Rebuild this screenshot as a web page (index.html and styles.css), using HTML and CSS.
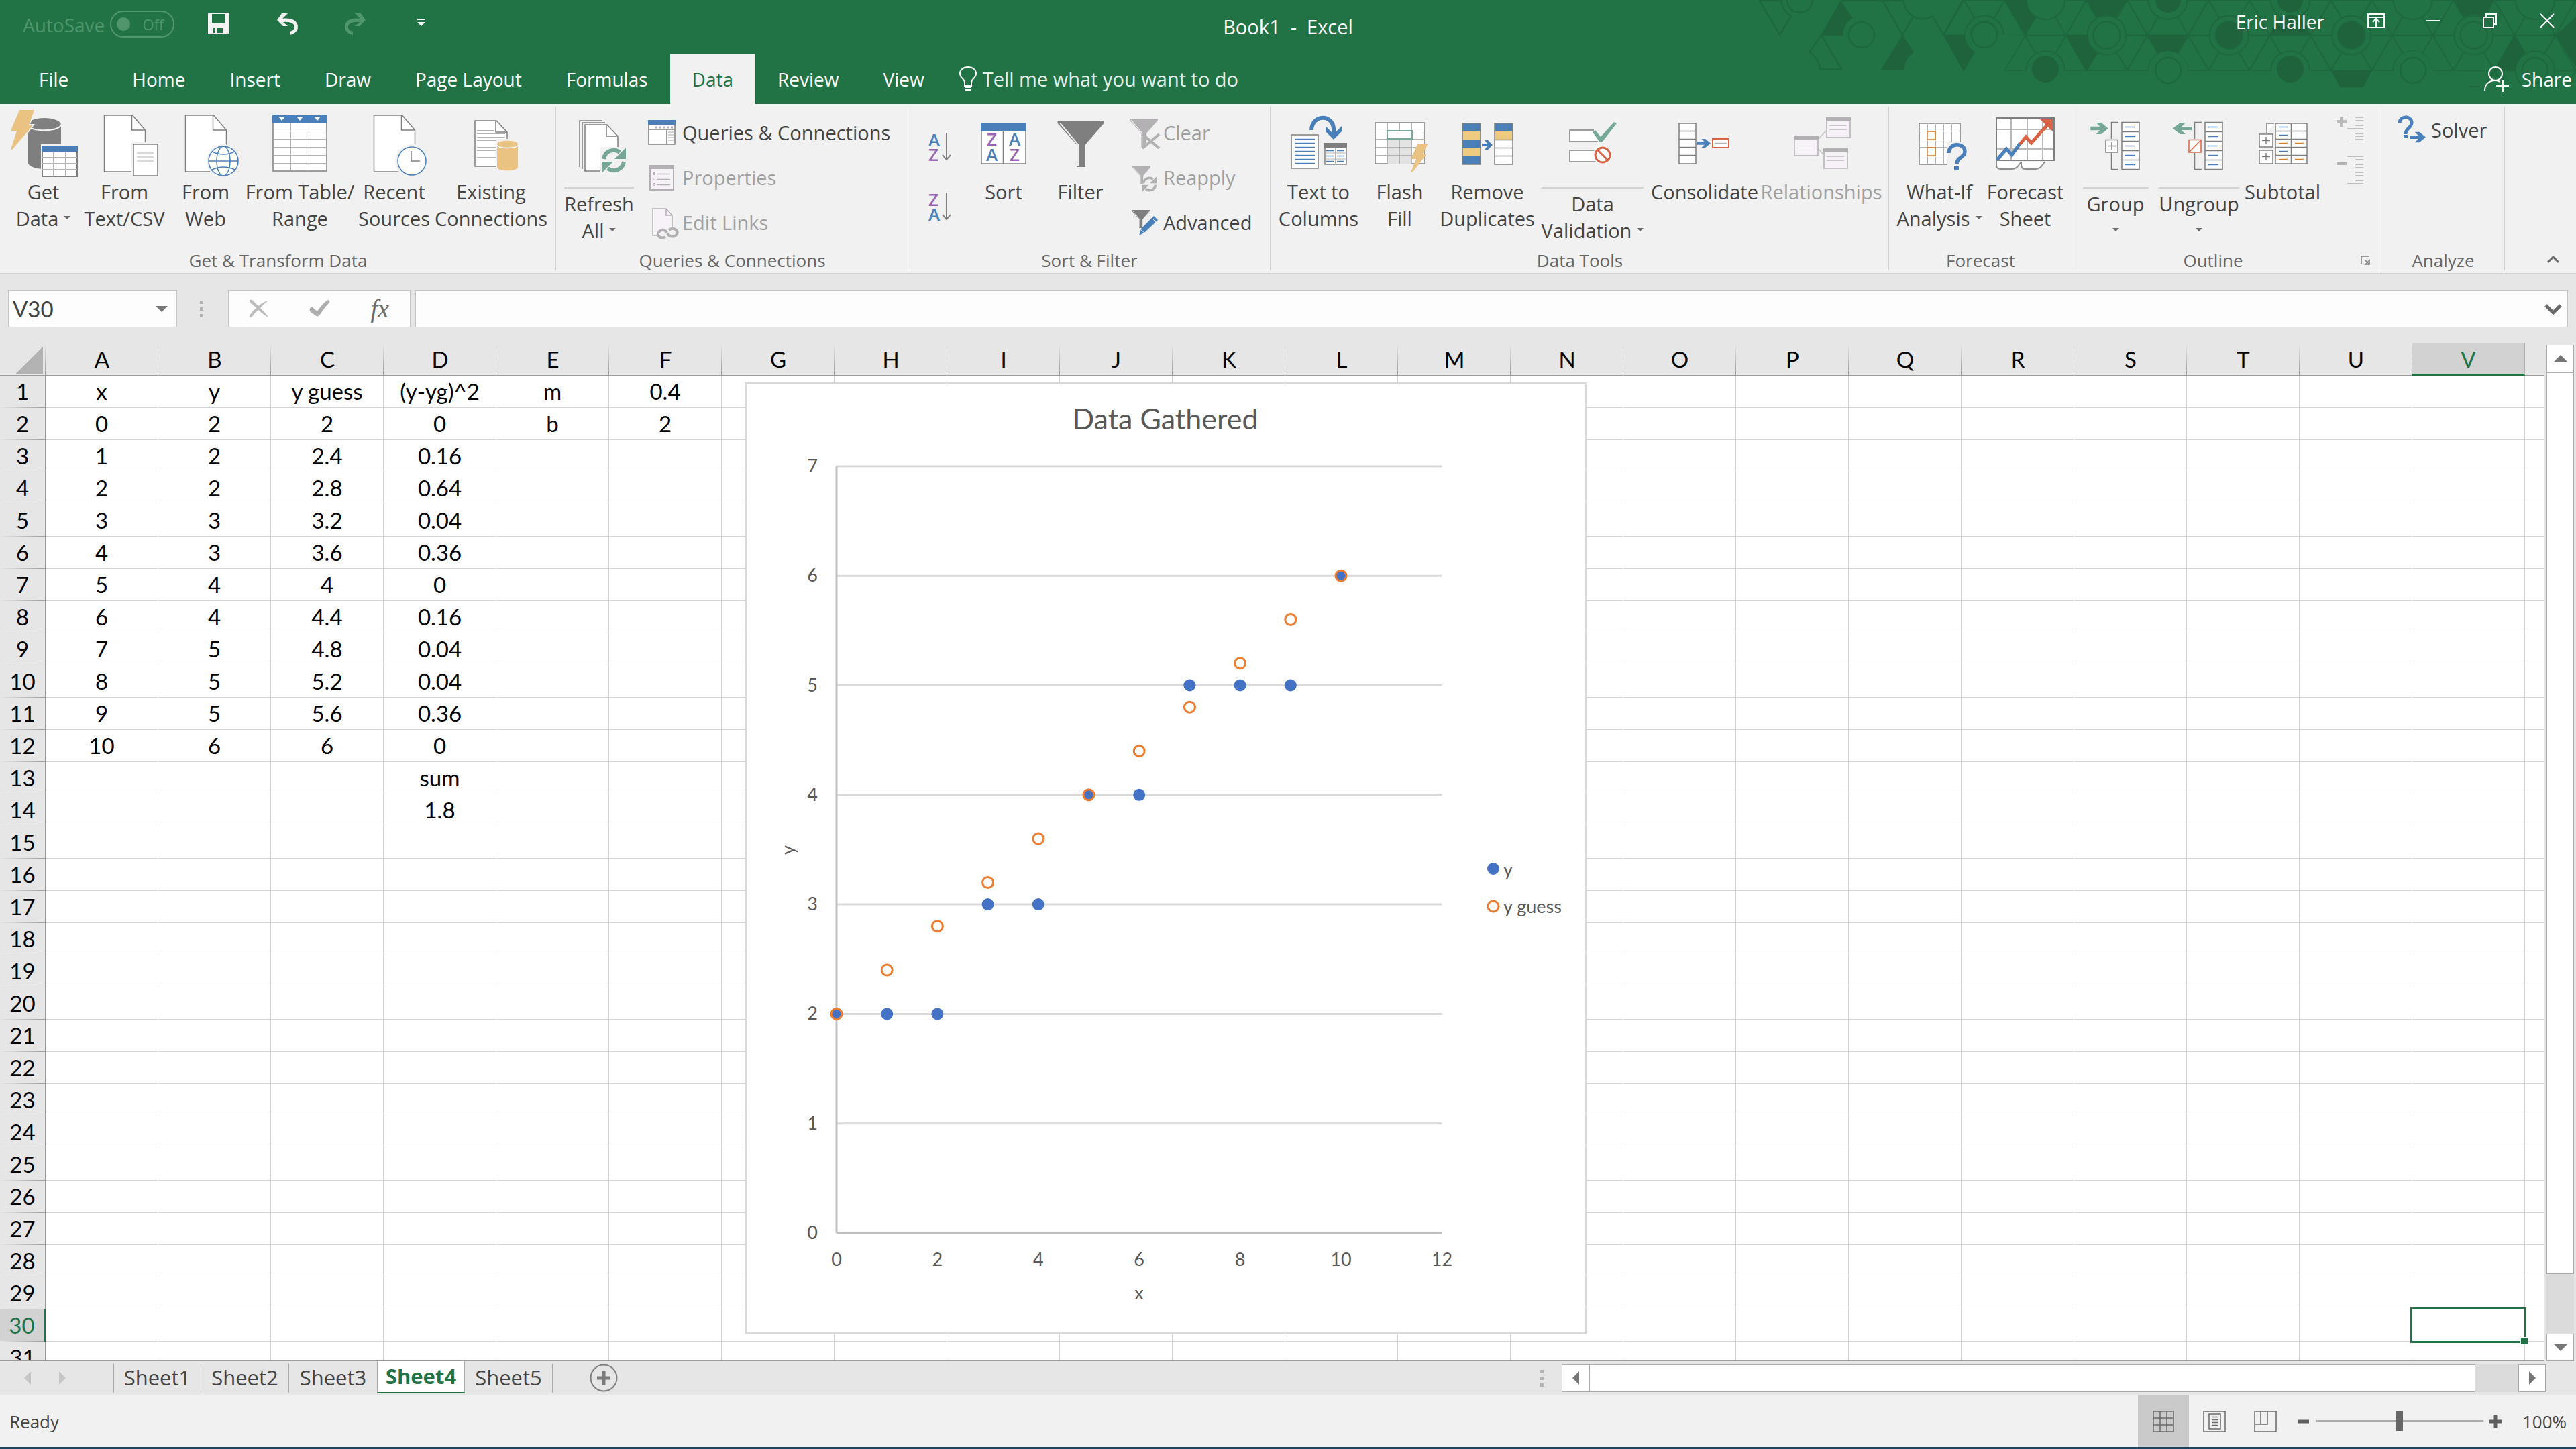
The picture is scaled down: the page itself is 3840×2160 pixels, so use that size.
FILE: index.html
```html
<!DOCTYPE html>
<html lang="en">
<head>
    <meta charset="UTF-8">
    <meta name="viewport" content="width=device-width, initial-scale=1.0">
    <title>Book1 - Excel</title>
    <link rel="stylesheet" href="styles.css">
</head>
<body>
    <svg class="defs" aria-hidden="true">
        <symbol id="doc" viewBox="0 0 64 86">
            <path d="M1 1H43L62 23V85H1Z" fill="#fff" stroke="#7f7f7f" stroke-width="1.5"/>
            <path d="M42 1V23H62" fill="none" stroke="#7f7f7f" stroke-width="1.5"/>
        </symbol>
        <symbol id="bolt" viewBox="0 0 36 60">
            <path d="M14 0H36L25 23H33L4 60H0L11 33H0Z" fill="#eac282"/>
        </symbol>
        <symbol id="cycle" viewBox="0 0 38 38">
            <path d="M4 17A15 15 0 0 1 28 7M34 21A15 15 0 0 1 10 31" fill="none" stroke="currentColor" stroke-width="6"/>
            <path d="M37 0V17H20ZM1 38V21H18Z" fill="currentColor"/>
        </symbol>
        <symbol id="funnel" viewBox="0 0 70 70">
            <path d="M0 0H70V4L42 36V70H29V36L0 4Z" fill="currentColor"/>
            <path d="M4 4L31 36V68" fill="none" stroke="#f1f1f1" stroke-width="2"/>
        </symbol>
        <symbol id="arrow" viewBox="0 0 28 18">
            <path d="M0 6H15L9 0H17L28 9L17 18H9L15 12H0Z" fill="currentColor"/>
        </symbol>
    </svg>

    <header class="titlebar">
        <svg class="pattern" viewBox="2600 0 1240 155">
            <defs>
                <pattern id="tri" x="2866.8" y="0" width="182.4" height="105.2" patternUnits="userSpaceOnUse">
                    <g fill="none" stroke="#1e683f" stroke-width="2.5">
                        <path d="M0 0H182.4M0 52.6H182.4M0 105.2H182.4M0 0L60.8 105.2M60.8 0L121.6 105.2M121.6 0L182.4 105.2M60.8 0L0 105.2M121.6 0L60.8 105.2M182.4 0L121.6 105.2"/>
                        <g fill="#217346">
                            <circle cx="91.2" cy="52.6" r="29"/><circle cx="91.2" cy="52.6" r="20"/>
                            <circle cx="0" cy="0" r="29"/><circle cx="182.4" cy="0" r="29"/>
                            <circle cx="0" cy="105.2" r="29"/><circle cx="182.4" cy="105.2" r="29"/>
                        </g>
                    </g>
                </pattern>
            </defs>
            <path d="M2927 0H3840V130H3680L3666 106H2987L3018 52H2897Z" fill="url(#tri)"/>
            <g fill="none" stroke="#1e683f" stroke-width="2.5">
                <path d="M2623 1L2653 52L2670 24A31 31 0 0 1 2655 1ZM2715 52L2697 78A30 30 0 0 1 2713 103H2745ZM2744 1H2837M2806 0L2836 52L2852 25M2838 0A28 28 0 0 0 2881 24L2897 52L2926 0"/>
                <circle cx="2683" cy="0" r="19"/><circle cx="2775" cy="52" r="19"/>
                <circle cx="2958" cy="52" r="19"/>
                <g fill="#217346">
                    <circle cx="3232" cy="105" r="29" stroke="none"/><circle cx="3597" cy="105" r="29" stroke="none"/>
                    <circle cx="3232" cy="105" r="19"/><circle cx="3597" cy="105" r="19"/><circle cx="3779" cy="105" r="19"/>
                </g>
            </g>
            <g fill="#1e633b">
                <path d="M2744 1L2762 27A30 30 0 0 0 2747 53H2714ZM2836 52L2853 78A30 30 0 0 0 2839 104H2804ZM2897 52H2929A30 30 0 0 0 2944 77L2927 107Z"/>
                <path d="M2988 0H3022A29 29 0 0 0 3035 26L3018 52ZM3080 52H3112A29 29 0 0 0 3127 79L3110 107ZM3110 0H3171L3154 26A29 29 0 0 0 3126 26ZM3201 52H3262L3246 80A29 29 0 0 0 3217 80ZM3383 52H3445L3428 26A29 29 0 0 0 3400 26ZM3657 0H3718L3702 26A29 29 0 0 0 3673 26ZM3475 105H3536L3523 130H3488ZM3749 52L3764 79A29 29 0 0 0 3750 105H3718ZM3840 26L3810 52L3826 79L3840 100Z"/>
                <circle cx="3049" cy="103" r="20"/><circle cx="3232" cy="0" r="19"/><circle cx="3323" cy="52" r="20"/>
                <circle cx="3414" cy="0" r="19"/><circle cx="3414" cy="103" r="20"/><circle cx="3505" cy="52" r="20"/>
            </g>
        </svg>

        <div class="title-row">
            <div class="quick">
                <span class="autosave">AutoSave</span>
                <button type="button" class="toggle" disabled><span class="knob"></span>Off</button>
                <button type="button" class="qbtn q-save" aria-label="Save"><svg width="32" height="32" viewBox="0 0 32 32"><path d="M2 0H30Q32 0 32 2V32H0V2Q0 0 2 0ZM6 2V15L7 16H25L26 15V2ZM8 22V30H10V23H14V30H22V22Z" fill="#f3f3f3" fill-rule="evenodd"/></svg></button>
                <button type="button" class="qbtn q-undo" aria-label="Undo"><svg width="34" height="34" viewBox="0 0 34 34"><path d="M8 1H17L9 9C24 7 32 13 32 21C32 28 26 32 20 33V28C24 27 27 25 27 21C27 16 20 13 10 14L17 20H10L1 11Z" fill="#f3f3f3"/></svg></button>
                <button type="button" class="qbtn q-redo" aria-label="Redo" disabled><svg width="34" height="34" viewBox="0 0 34 34"><path d="M26 1H17L25 9C10 7 2 13 2 21C2 28 8 32 14 33V28C10 27 7 25 7 21C7 16 14 13 24 14L17 20H24L33 11Z" fill="#4f966c"/></svg></button>
                <button type="button" class="qbtn q-more" aria-label="Customize"><svg width="12" height="12" viewBox="0 0 12 12"><path d="M0 0H12V2H0ZM0 5H12L6 11Z" fill="#fff"/></svg></button>
            </div>
            <h1 class="doc-title">Book1&nbsp; -&nbsp; Excel</h1>
            <div class="window-tools">
                <span class="user">Eric Haller</span>
                <button type="button" aria-label="Ribbon display options"><svg width="26" height="22" viewBox="0 0 26 22"><path d="M1 1H25V21H1ZM1 6H25M13 20V9M8 13L13 8L18 13" fill="none" stroke="#fff" stroke-width="2"/></svg></button>
                <button type="button" aria-label="Minimize"><svg width="26" height="22" viewBox="0 0 26 22"><path d="M3 11H23" stroke="#fff" stroke-width="2"/></svg></button>
                <button type="button" aria-label="Restore"><svg width="26" height="22" viewBox="0 0 26 22"><path d="M3 6H18V21H3ZM7 6V1H22V16H18" fill="none" stroke="#fff" stroke-width="2"/></svg></button>
                <button type="button" aria-label="Close"><svg width="26" height="22" viewBox="0 0 26 22"><path d="M3 1L23 21M23 1L3 21" stroke="#fff" stroke-width="2"/></svg></button>
            </div>
        </div>

        <nav class="tabs">
            <a class="tab file" href="#">File</a>
            <a class="tab" href="#">Home</a>
            <a class="tab" href="#">Insert</a>
            <a class="tab" href="#">Draw</a>
            <a class="tab" href="#">Page Layout</a>
            <a class="tab" href="#">Formulas</a>
            <a class="tab active" href="#">Data</a>
            <a class="tab" href="#">Review</a>
            <a class="tab" href="#">View</a>
            <a class="tell" href="#"><svg width="26" height="38" viewBox="0 0 26 38"><path d="M8 29V24C8 19 1 17 1 11C1 5 6 1 13 1S25 5 25 11C25 17 18 19 18 24V29Z" fill="none" stroke="#fff" stroke-width="2"/><path d="M8 29H18V32H8ZM8 34H18V36H8Z" fill="#fff"/></svg>Tell me what you want to do</a>
            <a class="share" href="#"><svg width="38" height="40" viewBox="0 0 38 40"><circle cx="17" cy="12" r="10" fill="none" stroke="#fff" stroke-width="2"/><path d="M1 37C1 27 8 22 17 22C20 22 22 23 24 24M18 30H37M28 21V39" fill="none" stroke="#fff" stroke-width="2"/></svg>Share</a>
        </nav>
    </header>

    <section class="ribbon">
        <div class="group g-get">
            <div class="group-body">
                <button type="button" class="big w120">
                    <svg viewBox="14 160 100 106"><path d="M40 187V240C40 248 52 252 65 252S90 248 90 240V187Z" fill="#7f7f7f"/><ellipse cx="65" cy="186" rx="25" ry="10" fill="#7f7f7f"/><path d="M40 186C42 197 88 197 90 186" fill="none" stroke="#f1f1f1" stroke-width="2"/><path d="M28 160H54L44 185H51L18 228H12L22 198H12Z" fill="#f1f1f1"/><path d="M28 164H50L42 187H48L17 223H15L24 195H15Z" fill="#eac282"/><path d="M60 215H116V265H60Z" fill="#f1f1f1"/><path d="M62 218H114V263H62Z" fill="#fff" stroke="#7f7f7f" stroke-width="2"/><path d="M61 217H115V226H61Z" fill="#4a80ba"/><path d="M62 235H114M62 244H114M62 253H114M79 227V262M97 227V262" stroke="#b3b3b3" stroke-width="2"/></svg>
                    <span class="label">Get<br>Data<i class="caret"></i></span>
                </button>
                <button type="button" class="big w120">
                    <svg viewBox="135 160 100 106"><use href="#doc" x="153" y="171" width="65" height="86"/><path d="M195 212H237V264H195Z" fill="#f1f1f1"/><path d="M198 215H234V262H198Z" fill="#fff" stroke="#7f7f7f" stroke-width="1.5"/><path d="M203 228H228M203 234H228M203 240H228" stroke="#b3b3b3"/></svg>
                    <span class="label">From<br>Text/CSV</span>
                </button>
                <button type="button" class="big w120">
                    <svg viewBox="256 160 100 106"><use href="#doc" x="274" y="171" width="65" height="86"/><circle cx="332" cy="240" r="25" fill="#f1f1f1"/><g fill="none" stroke="#4a80ba" stroke-width="1.5"><circle cx="332" cy="240" r="22" fill="#fff"/><ellipse cx="332" cy="240" rx="10" ry="22"/><path d="M310 240H354M315 226Q332 234 349 226M315 253Q332 245 349 253"/></g></svg>
                    <span class="label">From<br>Web</span>
                </button>
                <button type="button" class="big w164">
                    <svg viewBox="397 160 100 106"><path d="M407 172H487V255H407Z" fill="#fff" stroke="#7f7f7f" stroke-width="1.5"/><path d="M406 171H488V184H406Z" fill="#4a80ba"/><path d="M415 174H425L420 180ZM442 174H452L447 180ZM468 174H478L473 180Z" fill="#fff"/><path d="M408 195.5H487M408 207.5H487M408 219.5H487M408 231.5H487M408 243.5H487M433.5 184V255M460.5 184V255" stroke="#b3b3b3"/></svg>
                    <span class="label">From Table/<br>Range</span>
                </button>
                <button type="button" class="big w120">
                    <svg viewBox="538 160 100 106"><use href="#doc" x="556" y="171" width="65" height="86"/><circle cx="614" cy="240" r="25" fill="#f1f1f1"/><circle cx="614" cy="240" r="21" fill="#fff" stroke="#4a80ba" stroke-width="1.5"/><path d="M613 225V240H626" fill="none" stroke="#7f7f7f" stroke-width="1.5"/></svg>
                    <span class="label">Recent<br>Sources</span>
                </button>
                <button type="button" class="big w168">
                    <svg viewBox="682 160 100 106"><path d="M708 180H740L756 197V248H708Z" fill="#fff" stroke="#7f7f7f" stroke-width="1.5"/><path d="M739 180V197H756" fill="none" stroke="#7f7f7f" stroke-width="1.5"/><path d="M711 194.5H736M711 199.5H753M711 204.5H753M711 209.5H743M711 214.5H739M711 219.5H739M711 224.5H739M711 229.5H739M711 234.5H739" stroke="#b3b3b3"/><path d="M740 207H775V256H740Z" fill="#f1f1f1"/><path d="M741 215C741 208 772 208 772 215V249C772 256 741 256 741 249Z" fill="#eac282"/><path d="M741 216C743 222 770 222 772 216" fill="none" stroke="#fff" stroke-width="1.5"/></svg>
                    <span class="label">Existing<br>Connections</span>
                </button>
            </div>
            <div class="group-label">Get &amp; Transform Data</div>
        </div>

        <div class="group g-queries">
            <div class="group-body">
                <button type="button" class="big split w100">
                    <svg viewBox="843 160 100 106"><path d="M864 249V180H898M868 252V183H902" fill="none" stroke="#7f7f7f" stroke-width="1.5"/><path d="M872 186H905L921 203V255H872Z" fill="#fff" stroke="#7f7f7f" stroke-width="1.5"/><path d="M904 186V203H921" fill="none" stroke="#7f7f7f" stroke-width="1.5"/><path d="M895 219H936V260H895Z" fill="#f1f1f1"/><use href="#cycle" x="896" y="220" width="38" height="38" color="#76a797"/></svg>
                    <span class="label">Refresh<br>All<i class="caret"></i></span>
                </button>
                <div class="small-col">
                    <button type="button" class="small"><svg viewBox="966 173 48 48"><path d="M968 179H1007V214H968Z" fill="#fff" stroke="#7f7f7f" stroke-width="1.5"/><path d="M967 178H1008V185H967Z" fill="#4a80ba"/><path d="M977 189H1006" stroke="#b3b3b3" stroke-width="3" stroke-dasharray="3 3"/><path d="M968 192.5H1007M994.5 193V214M997 196H1005M997 200H1005M997 204H1005M997 208H1005" stroke="#a0a0a0"/></svg>Queries &amp; Connections</button>
                    <button type="button" class="small" disabled><svg viewBox="966 240 48 48"><path d="M970 246H1005V282H970Z" fill="#f6f2f8" stroke="#b3b0b3" stroke-width="2"/><path d="M969 245H1006V251H969Z" fill="#b3b0b3"/><path d="M980 258.5H1000M980 266.5H1000M980 274.5H1000" stroke="#b3b0b3" stroke-width="1.5"/><g fill="none" stroke="#b3b0b3"><circle cx="976" cy="258" r="1.5" fill="#b3b0b3"/><circle cx="976" cy="266" r="1.5"/><circle cx="976" cy="274" r="1.5"/></g></svg>Properties</button>
                    <button type="button" class="small" disabled><svg viewBox="966 307 48 48"><path d="M980 350H974V310H994L1003 320V340" fill="#f6f2f8" stroke="#b3b0b3" stroke-width="1.5"/><path d="M994 310V320H1003" fill="none" stroke="#b3b0b3" stroke-width="1.5"/><path d="M993 352C985 356 979 350 983 345C987 340 993 341 995 346M998 342C1004 337 1013 342 1010 348C1007 353 999 353 996 347" fill="none" stroke="#b3b0b3" stroke-width="4"/></svg>Edit Links</button>
                </div>
            </div>
            <div class="group-label">Queries &amp; Connections</div>
        </div>

        <div class="group g-sort">
            <div class="group-body">
                <div class="az-col">
                    <button type="button" class="az" aria-label="Sort A to Z"><svg viewBox="1377 190 44 60"><text x="1383" y="218" fill="#4a80ba">A</text><text x="1383" y="240" fill="#9966b5">Z</text><path d="M1410 198V238M1404 231L1410 238L1416 231" fill="none" stroke="#7f7f7f" stroke-width="2"/></svg></button>
                    <button type="button" class="az" aria-label="Sort Z to A"><svg viewBox="1377 190 44 60"><text x="1383" y="218" fill="#9966b5">Z</text><text x="1383" y="240" fill="#4a80ba">A</text><path d="M1410 198V238M1404 231L1410 238L1416 231" fill="none" stroke="#7f7f7f" stroke-width="2"/></svg></button>
                </div>
                <button type="button" class="big w100">
                    <svg viewBox="1446 160 100 106"><path d="M1463 185H1529V244H1463Z" fill="#fff" stroke="#7f7f7f" stroke-width="1.5"/><path d="M1462 184H1530V196H1462Z" fill="#4a80ba"/><path d="M1495.5 196V244" stroke="#7f7f7f" stroke-width="1.5"/><text x="1471" y="217" fill="#9966b5">Z</text><text x="1504" y="217" fill="#4a80ba">A</text><text x="1470" y="240" fill="#4a80ba">A</text><text x="1505" y="240" fill="#9966b5">Z</text></svg>
                    <span class="label">Sort</span>
                </button>
                <button type="button" class="big w120">
                    <svg viewBox="1560 160 100 106" color="#7f7f7f"><use href="#funnel" x="1575" y="180" width="70" height="69"/></svg>
                    <span class="label">Filter</span>
                </button>
                <div class="small-col filter-col">
                    <button type="button" class="small" disabled><svg viewBox="1682 173 48 48" color="#b3b0b3"><use href="#funnel" x="1684" y="176" width="42" height="42"/><path d="M1703 199L1728 220M1728 199L1703 220" stroke="#b3b0b3" stroke-width="4"/></svg>Clear</button>
                    <button type="button" class="small" disabled><svg viewBox="1682 240 48 48" color="#b3b0b3"><use href="#funnel" x="1688" y="247" width="27" height="27"/><use href="#cycle" x="1702" y="262" width="23" height="23"/></svg>Reapply</button>
                    <button type="button" class="small"><svg viewBox="1682 307 48 48" color="#7f7f7f"><use href="#funnel" x="1687" y="312" width="27" height="27"/><path d="M1698 350L1701 340L1720 321L1726 327L1707 345Z" fill="#4a80ba"/><path d="M1700 341L1706 346M1717 324L1723 330" stroke="#f1f1f1"/></svg>Advanced</button>
                </div>
            </div>
            <div class="group-label">Sort &amp; Filter</div>
        </div>

        <div class="group g-tools">
            <div class="group-body">
                <button type="button" class="big w120">
                    <svg viewBox="1914 160 100 106"><path d="M1953 194C1954 170 1985 170 1986 192V202" fill="none" stroke="#4a80ba" stroke-width="6"/><path d="M1974 188L1986 200L1998 188V196L1986 208L1974 196Z" fill="#4a80ba"/><path d="M1923 201H1963V251H1923Z" fill="#fff" stroke="#7f7f7f" stroke-width="1.5"/><path d="M1928 207.5H1958M1928 213.5H1958M1928 219.5H1958M1928 225.5H1958M1928 231.5H1958M1928 237.5H1958M1928 243.5H1958" stroke="#4a80ba" stroke-width="1.5"/><path d="M1973 214H2005V245H1973Z" fill="#fff" stroke="#7f7f7f" stroke-width="1.5"/><path d="M1972 213H2006V221H1972Z" fill="#7f7f7f"/><path d="M1973 228H2005M1973 237H2005M1988.5 221V245" stroke="#b3b3b3"/><path d="M1975 224.5H1986M1991 224.5H2002M1975 232.5H1986M1991 232.5H2002M1975 240.5H1986M1991 240.5H2002" stroke="#4a80ba" stroke-width="1.5"/></svg>
                    <span class="label">Text to<br>Columns</span>
                </button>
                <button type="button" class="big w120">
                    <svg viewBox="2035 160 100 106"><path d="M2048 183H2121V244H2048Z" fill="#fff" stroke="#7f7f7f" stroke-width="1.5"/><path d="M2066 208H2103V244H2066Z" fill="#e3e3e3"/><path d="M2066.5 184V244M2084.5 184V244M2102.5 184V244M2049 195.5H2121M2049 207.5H2121M2049 219.5H2121M2049 231.5H2121" stroke="#b3b3b3"/><path d="M2066 195H2103V207H2066Z" fill="#fff" stroke="#76a797" stroke-width="2"/><use href="#bolt" x="2095" y="214" width="38" height="42"/></svg>
                    <span class="label">Flash<br>Fill</span>
                </button>
                <button type="button" class="big w140">
                    <svg viewBox="2165 160 100 106" color="#4a80ba"><path d="M2178 184H2205V245H2178Z" fill="#eec980"/><path d="M2178 184H2205V195H2178ZM2178 208H2205V220H2178ZM2178 232H2205V245H2178Z" fill="#4a80ba"/><path d="M2226 184H2253V245H2226Z" fill="#fff"/><path d="M2226 184H2253V195H2226Z" fill="#4a80ba"/><path d="M2226 195H2253V208H2226Z" fill="#eec980"/><path d="M2226 208.5H2253M2226 220.5H2253M2226 232.5H2253M2178 184H2205V245H2178ZM2226 184H2253V245H2226Z" fill="none" stroke="#7f7f7f" stroke-width="1.5"/><path d="M2207 214H2215L2211 209H2216L2223 216L2216 223H2211L2215 218H2207Z" fill="currentColor"/></svg>
                    <span class="label">Remove<br>Duplicates</span>
                </button>
                <button type="button" class="big split w176">
                    <svg viewBox="2322 160 100 106"><path d="M2374 194H2338V211H2380M2375 224H2338V241H2378" fill="#fff" stroke="#7f7f7f" stroke-width="1.5"/><path d="M2372 197L2376 194L2384 204L2404 182L2408 184L2386 212H2383Z" fill="#76a797"/><circle cx="2387" cy="231" r="14" fill="#fff"/><circle cx="2387" cy="231" r="11" fill="none" stroke="#d86344" stroke-width="3"/><path d="M2379 223L2395 239" stroke="#d86344" stroke-width="3"/></svg>
                    <span class="label">Data<br>Validation<i class="caret"></i></span>
                </button>
                <button type="button" class="big w160">
                    <svg viewBox="2490 160 100 106" color="#4a80ba"><path d="M2502 184H2527V244H2502ZM2502 195.5H2527M2502 207.5H2527M2502 219.5H2527M2502 231.5H2527" fill="#fff" stroke="#7f7f7f" stroke-width="1.5"/><use href="#arrow" x="2529" y="205" width="20" height="17"/><path d="M2552 207H2576V220H2552Z" fill="#fff" stroke="#d86344" stroke-width="2"/><path d="M2555 213.5H2573" stroke="#b3b3b3" stroke-width="1.5"/></svg>
                    <span class="label">Consolidate</span>
                </button>
                <button type="button" class="big w188" disabled>
                    <svg viewBox="2664 160 100 106"><path d="M2709 208L2721 195M2709 221L2717 230" stroke="#c5c3c5" stroke-width="1.5"/><g fill="#f6f2f8" stroke="#b3b0b3" stroke-width="1.5"><path d="M2722 176H2757V205H2722ZM2674 203H2709V232H2674ZM2718 222H2753V251H2718Z"/></g><path d="M2721 175H2758V181H2721ZM2673 202H2710V208H2673ZM2717 221H2754V227H2717Z" fill="#b3b0b3"/><path d="M2726 187.5H2752M2726 193.5H2752M2678 214.5H2704M2678 220.5H2704M2722 233.5H2748M2722 239.5H2748" stroke="#cbc8cb"/></svg>
                    <span class="label">Relationships</span>
                </button>
            </div>
            <div class="group-label">Data Tools</div>
        </div>

        <div class="group g-forecast">
            <div class="group-body">
                <button type="button" class="big w128">
                    <svg viewBox="2842 160 100 106"><path d="M2862 184H2923V245H2862Z" fill="#fff" stroke="#7f7f7f" stroke-width="1.5"/><path d="M2874.5 184V244M2886.5 184V244M2898.5 184V244M2910.5 184V244M2862 195.5H2922M2862 208.5H2922M2862 219.5H2922M2862 232.5H2922" stroke="#b3b3b3"/><path d="M2874 196H2886V208H2874ZM2874 220H2886V232H2874Z" fill="#fff" stroke="#dd7a22" stroke-width="1.5"/><path d="M2904 212H2936V258H2904Z" fill="#f1f1f1"/><path d="M2906 228C2906 212 2930 212 2930 226C2930 235 2918 234 2918 244" fill="none" stroke="#4a80ba" stroke-width="5.5"/><path d="M2914 248H2921V254H2914Z" fill="#4a80ba"/></svg>
                    <span class="label">What-If<br>Analysis<i class="caret"></i></span>
                </button>
                <button type="button" class="big w128">
                    <svg viewBox="2970 160 100 106"><path d="M2977 240C2977 248 2976 252 2984 252H3000C3008 252 3010 246 3014 241M3014 241C3014 248 3014 252 3020 252H3036C3044 252 3047 244 3049 241" fill="#fff" stroke="#8f8f8f" stroke-width="2"/><path d="M2977 176H3063V239H2977Z" fill="#fff" stroke="#7f7f7f" stroke-width="2"/><path d="M2999 177V239M3023 177V239M3046 177V239M2978 193H3062M2978 222H3062" stroke="#b9b9b9" stroke-width="2"/><path d="M2978 238L2992 222L3000 231L3012 214" fill="none" stroke="#4a80ba" stroke-width="5"/><path d="M3012 215L3021 204L3029 213L3056 183" fill="none" stroke="#d86344" stroke-width="5"/><path d="M3042 178H3061V196Z" fill="#d86344"/></svg>
                    <span class="label">Forecast<br>Sheet</span>
                </button>
            </div>
            <div class="group-label">Forecast</div>
        </div>

        <div class="group g-outline">
            <div class="group-body">
                <button type="button" class="big split w120">
                    <svg viewBox="3103 160 100 106" color="#76a797"><use href="#arrow" x="3115" y="183" width="27" height="17"/><path d="M3157 182.5H3146.5V207M3146.5 228V252.5H3157" fill="none" stroke="#7f7f7f" stroke-width="1.5"/><path d="M3138 208.5H3156V227H3138ZM3162 182.5H3188V252.5H3162ZM3162 196.5H3188M3162 210.5H3188M3162 224.5H3188M3162 238.5H3188" fill="#fff" stroke="#7f7f7f" stroke-width="1.5"/><path d="M3141 217.5H3153M3147 212V223" stroke="#7f7f7f" stroke-width="1.5"/><path d="M3167 189.5H3182M3167 203.5H3182M3167 217.5H3182M3167 231.5H3182M3167 245.5H3182" stroke="#4a80ba" stroke-width="1.5"/></svg>
                    <span class="label">Group<br><i class="caret alone"></i></span>
                </button>
                <button type="button" class="big split w128">
                    <svg viewBox="3226 160 100 106"><path d="M3265 189V194H3250L3256 200H3248L3237 191.5L3248 183H3256L3250 189Z" fill="#76a797"/><path d="M3280 182.5H3269.5V207M3269.5 228V252.5H3280" fill="none" stroke="#7f7f7f" stroke-width="1.5"/><path d="M3261 208.5H3279V227H3261ZM3279 208.5L3261 227" fill="#fff" stroke="#d86344" stroke-width="1.5"/><path d="M3285 182.5H3311V252.5H3285ZM3285 196.5H3311M3285 210.5H3311M3285 224.5H3311M3285 238.5H3311" fill="#fff" stroke="#7f7f7f" stroke-width="1.5"/><path d="M3290 189.5H3305M3290 203.5H3305M3290 217.5H3305M3290 231.5H3305M3290 245.5H3305" stroke="#4a80ba" stroke-width="1.5"/></svg>
                    <span class="label">Ungroup<br><i class="caret alone"></i></span>
                </button>
                <button type="button" class="big w120">
                    <svg viewBox="3352 160 100 106"><path d="M3391 184H3438V244H3391ZM3391 195.5H3438M3391 207.5H3438M3391 219.5H3438M3391 231.5H3438M3414.5 184V244M3367 200H3387V219H3367ZM3367 224H3387V244H3367ZM3389 184H3378V199" fill="#fff" stroke="#7f7f7f" stroke-width="1.5"/><path d="M3371 209.5H3383M3377 204V215M3371 233.5H3383M3377 228V239" stroke="#7f7f7f" stroke-width="1.5"/><path d="M3396 189.5H3409M3396 201.5H3409M3396 225.5H3409" stroke="#4a80ba" stroke-width="1.5"/><path d="M3396 213.5H3409M3420 213.5H3433M3396 237.5H3409M3420 237.5H3433" stroke="#dd7a22" stroke-width="1.5"/></svg>
                    <span class="label">Subtotal</span>
                </button>
                <div class="detail-col">
                    <button type="button" aria-label="Show Detail" disabled><svg width="44" height="44" viewBox="3480 170 44 44"><path d="M3482 181.5H3497M3489.5 174V189" stroke="#bcb9bc" stroke-width="5"/><path d="M3498 171.5H3522M3498 191.5H3522M3498 211.5H3522M3510 175.5H3522M3510 179.5H3522M3510 183.5H3522M3510 187.5H3522M3510 195.5H3522M3510 199.5H3522M3510 203.5H3522M3510 207.5H3522" stroke="#c1c1c1"/></svg></button>
                    <button type="button" aria-label="Hide Detail" disabled><svg width="44" height="44" viewBox="3480 170 44 44"><path d="M3482 181.5H3497" stroke="#b3b0b3" stroke-width="5"/><path d="M3498 171.5H3522M3498 191.5H3522M3498 211.5H3522M3510 175.5H3522M3510 179.5H3522M3510 183.5H3522M3510 187.5H3522M3510 195.5H3522M3510 199.5H3522M3510 203.5H3522M3510 207.5H3522" stroke="#c1c1c1"/></svg></button>
                </div>
            </div>
            <div class="group-label outline-label">Outline<button type="button" class="launcher" aria-label="Outline settings"><svg width="14" height="14" viewBox="0 0 14 14"><path d="M1 12V1H13M6 6L12 12M13 7V13H7Z" fill="none" stroke="#7f7f7f" stroke-width="1.5"/></svg></button></div>
        </div>

        <div class="group g-analyze">
            <div class="group-body">
                <div class="small-col">
                    <button type="button" class="small"><svg viewBox="3572 168 48 48" color="#4a80ba"><path d="M3577 182C3577 170 3595 170 3595 181C3595 189 3586 189 3586 198" fill="none" stroke="#4a80ba" stroke-width="5"/><path d="M3583 199H3589V204H3583Z" fill="#4a80ba"/><use href="#arrow" x="3592" y="194" width="24" height="17"/></svg>Solver</button>
                </div>
            </div>
            <div class="group-label">Analyze</div>
        </div>

        <button type="button" class="collapse" aria-label="Collapse the ribbon"><svg width="20" height="12" viewBox="0 0 20 12"><path d="M2 10L10 2L18 10" fill="none" stroke="#6a6a6a" stroke-width="3"/></svg></button>
    </section>

    <section class="formula-bar">
        <div class="name-box">
            <input type="text" value="V30" aria-label="Name Box">
            <button type="button" aria-label="Open name list"><i></i></button>
        </div>
        <span class="dots"><i></i><i></i><i></i></span>
        <div class="fx-box">
            <button type="button" aria-label="Cancel"><svg width="30" height="28" viewBox="0 0 30 28"><path d="M1 1C4 0 6 1 8 4L14 10C19 6 24 3 29 2C24 6 20 9 17 13C22 18 26 22 29 27C24 25 19 20 14 16C10 19 7 23 5 26C3 28 0 27 1 24C4 20 7 16 11 13C8 10 5 7 2 5Z" fill="#bdbdbd"/></svg></button>
            <button type="button" aria-label="Enter"><svg width="32" height="28" viewBox="0 0 32 28"><path d="M1 14C2 11 5 11 7 14L12 18C17 10 23 4 28 1C30 1 31 3 30 5C25 10 20 16 16 23L12 26L2 19C1 17 0 16 1 14Z" fill="#adadad"/></svg></button>
            <button type="button" class="fx" aria-label="Insert Function">fx</button>
        </div>
        <div class="formula">
            <input type="text" aria-label="Formula">
            <button type="button" aria-label="Expand formula bar"><svg width="26" height="18" viewBox="0 0 26 18"><path d="M2 3L13 14L24 3" fill="none" stroke="#6a6a6a" stroke-width="5"/></svg></button>
        </div>
    </section>

    <main class="workspace">
        <div class="sheet">
            <table class="grid" id="grid"></table>
            <svg class="chart" id="chart" viewBox="0 0 1250 1413" role="img" aria-label="Data Gathered"></svg>
        </div>
        <div class="vscroll">
            <button type="button" aria-label="Scroll up"><i class="up"></i></button>
            <div class="vthumb"></div>
            <div class="vtrack"></div>
            <button type="button" aria-label="Scroll down"><i class="down"></i></button>
        </div>
    </main>

    <footer>
        <div class="sheet-bar">
            <div class="sheet-nav">
                <button type="button" aria-label="Previous sheet" disabled><i class="left"></i></button>
                <button type="button" aria-label="Next sheet" disabled><i class="right"></i></button>
            </div>
            <button type="button" class="sheet-tab">Sheet1</button>
            <button type="button" class="sheet-tab">Sheet2</button>
            <button type="button" class="sheet-tab no-line">Sheet3</button>
            <button type="button" class="sheet-tab current">Sheet4</button>
            <button type="button" class="sheet-tab">Sheet5</button>
            <button type="button" class="add-sheet" aria-label="New sheet"><svg width="42" height="42" viewBox="0 0 42 42"><circle cx="21" cy="21" r="19.5" fill="none" stroke="#7f7f7f" stroke-width="2"/><path d="M11 21H31M21 11V31" stroke="#7a7a7a" stroke-width="5"/></svg></button>
            <span class="dots"><i></i><i></i><i></i></span>
            <div class="hscroll">
                <button type="button" aria-label="Scroll left"><i class="left"></i></button>
                <div class="hthumb"></div>
                <div class="htrack"></div>
                <button type="button" aria-label="Scroll right"><i class="right"></i></button>
            </div>
        </div>
        <div class="status">
            <span class="ready">Ready</span>
            <button type="button" class="view on" aria-label="Normal"><svg width="32" height="32" viewBox="0 0 32 32"><path d="M1 1H31V31H1ZM1 11H31M1 21H31M11 1V31M21 1V31" fill="none" stroke="#6a6a6a" stroke-width="1.5"/></svg></button>
            <button type="button" class="view" aria-label="Page Layout"><svg width="34" height="32" viewBox="0 0 34 32"><path d="M1 1H33V31H1ZM9 5H26V27H9ZM13 9.5H22M13 13.5H22M13 17.5H22M13 21.5H22" fill="none" stroke="#6a6a6a" stroke-width="1.5"/></svg></button>
            <button type="button" class="view" aria-label="Page Break Preview"><svg width="34" height="32" viewBox="0 0 34 32"><path d="M1 1H33V31H1ZM1 20H20V1M10 1V20" fill="none" stroke="#6a6a6a" stroke-width="1.5"/></svg></button>
            <button type="button" class="zoom-btn" aria-label="Zoom out"><svg width="20" height="20" viewBox="0 0 20 20"><path d="M2 10H18" stroke="#5f5f5f" stroke-width="5"/></svg></button>
            <input type="range" class="zoom" min="0" max="200" value="100" aria-label="Zoom">
            <button type="button" class="zoom-btn" aria-label="Zoom in"><svg width="20" height="20" viewBox="0 0 20 20"><path d="M0 10H20M10 0V20" stroke="#5f5f5f" stroke-width="5"/></svg></button>
            <span class="percent">100%</span>
        </div>
    </footer>

    <script src="script.js"></script>
</body>
</html>
```
FILE: styles.css
```css
* {
    box-sizing: border-box;
}
body {
    font-family: "Open Sans", "Noto Sans", sans-serif;
    font-size: 29px;
    margin: 0;
    height: 100vh;
    display: flex;
    flex-direction: column;
    background-color: #e6e6e6;
    color: #444;
    overflow: hidden;
    border-bottom: 3px solid #1d4560;
}
button {
    font: inherit;
    color: inherit;
    background: none;
    border: none;
    padding: 0;
}
a {
    color: inherit;
    text-decoration: none;
}
svg {
    display: block;
}
.defs {
    position: absolute;
    width: 0;
    height: 0;
}

/* title bar and tabs */
.titlebar {
    position: relative;
    background-color: #217346;
    color: #fff;
    height: 155px;
    flex: none;
}
.pattern {
    position: absolute;
    right: 0;
    top: 0;
    width: 1240px;
    height: 155px;
}
.title-row {
    position: relative;
    display: grid;
    grid-template-columns: 1fr auto 1fr;
    height: 80px;
}
.quick {
    display: flex;
    align-items: flex-start;
    padding-left: 34px;
}
.autosave {
    color: #4f966c;
    font-size: 28px;
    line-height: 40px;
    margin-top: 17px;
}
.toggle {
    width: 96px;
    height: 40px;
    margin: 16px 0 0 8px;
    border: 2px solid #4f966c;
    border-radius: 20px;
    color: #4f966c;
    font-size: 22px;
    display: flex;
    align-items: center;
    justify-content: space-between;
    padding: 0 14px 0 8px;
}
.knob {
    width: 20px;
    height: 20px;
    border-radius: 50%;
    background-color: #4f966c;
}
.qbtn {
    margin-top: 19px;
}
.q-save {
    margin-left: 50px;
}
.q-undo {
    margin-left: 70px;
}
.q-redo {
    margin-left: 66px;
}
.q-more {
    margin: 28px 0 0 76px;
}
.doc-title {
    font-size: 29px;
    font-weight: 400;
    line-height: 40px;
    margin: 20px 0 0;
}
.window-tools {
    display: flex;
    justify-content: flex-end;
    align-items: flex-start;
    padding-right: 30px;
    font-size: 28px;
}
.user {
    line-height: 40px;
    margin: 12px 0 0;
}
.window-tools button {
    margin: 20px 0 0 59px;
}
.window-tools .user + button {
    margin-left: 64px;
}
.tabs {
    position: relative;
    display: flex;
    height: 75px;
    line-height: 76px;
}
.tab {
    font-size: 28px;
    padding: 0 33px;
}
.tab.file {
    padding: 0 62px 0 58px;
}
.tab.active {
    background-color: #f1f1f1;
    color: #217346;
}
.tell, .share {
    display: flex;
    align-items: center;
    gap: 9px;
}
.tell {
    margin-left: 19px;
    color: #e3efe8;
}
.share {
    margin-left: auto;
    padding-right: 6px;
    gap: 18px;
    font-size: 28px;
}

/* ribbon */
.ribbon {
    flex: none;
    display: flex;
    height: 253px;
    background-color: #f1f1f1;
    border-bottom: 1px solid #d2d2d2;
    position: relative;
}
.group {
    display: flex;
    flex-direction: column;
    position: relative;
}
.group::after {
    content: "";
    position: absolute;
    right: 0;
    top: 4px;
    bottom: 4px;
    width: 1px;
    background-color: #d2d2d2;
}
.g-get {
    width: 829px;
}
.g-queries {
    width: 525px;
}
.g-sort {
    width: 540px;
}
.g-tools {
    width: 922px;
}
.g-forecast {
    width: 273px;
}
.g-outline {
    width: 461px;
}
.g-analyze {
    width: 184px;
}
.group-body {
    display: flex;
    flex: 1;
    padding-top: 5px;
}
.g-get .group-body,
.g-outline .group-body {
    padding-left: 4px;
}
.g-queries .group-body,
.g-sort .group-body {
    padding-left: 14px;
}
.g-tools .group-body,
.g-forecast .group-body {
    padding-left: 11px;
}
.g-analyze .group-body {
    padding-left: 22px;
}
.group-label {
    position: relative;
    text-align: center;
    font-size: 26px;
    line-height: 36px;
    height: 37px;
    color: #666;
}
.outline-label {
    padding-right: 41px;
}
.big {
    display: flex;
    flex-direction: column;
    align-items: center;
    white-space: nowrap;
}
.big svg {
    width: 100px;
    height: 106px;
    overflow: visible;
    flex: none;
}
.big text,
.az text {
    font-size: 26px;
    font-weight: 600;
}
.label {
    line-height: 40px;
}
.split .label {
    margin-top: 13px;
    padding-top: 3px;
    border-top: 2px solid #d2d2d2;
    min-width: 98px;
}
.caret {
    display: inline-block;
    border: 5px solid transparent;
    border-top-color: #6a6a6a;
    border-bottom: none;
    margin-left: 8px;
    vertical-align: 10px;
}
.caret.alone {
    margin-left: 0;
}
.w100 { width: 100px; }
.w120 { width: 121px; }
.w128 { width: 128px; }
.w140 { width: 140px; }
.w160 { width: 160px; }
.w164 { width: 160px; }
.w168 { width: 168px; }
.w176 { width: 174px; }
.w188 { width: 188px; }
button:disabled {
    color: #a0a0a0;
}
.toggle:disabled {
    color: #4f966c;
}
.small-col {
    display: flex;
    flex-direction: column;
    margin-left: 22px;
    padding-top: 4px;
}
.g-analyze .small-col {
    margin-left: 0;
    padding-top: 0;
}
.small {
    display: flex;
    align-items: center;
    gap: 4px;
    height: 67px;
}
.small svg {
    width: 48px;
    height: 48px;
}
.filter-col {
    margin-left: 11px;
}
.az-col {
    display: flex;
    flex-direction: column;
    gap: 29px;
    padding: 30px 24px 0 10px;
}
.az svg {
    width: 44px;
    height: 60px;
}
.g-sort .w100 {
    margin-right: 4px;
}
.detail-col {
    display: flex;
    flex-direction: column;
    gap: 18px;
    padding: 10px 0 0 18px;
}
.launcher {
    position: absolute;
    right: 17px;
    top: 11px;
}
.collapse {
    margin: auto 24px 14px auto;
}

/* formula bar */
.formula-bar {
    flex: none;
    display: flex;
    height: 104px;
    padding: 25px 12px 24px;
    font-family: Lato, "Open Sans", sans-serif;
    font-size: 33px;
}
.name-box, .fx-box, .formula {
    display: flex;
    align-items: center;
    background-color: #fdfdfd;
    border: 1px solid #c6c6c6;
}
.formula-bar input {
    font: inherit;
    color: #444;
    border: none;
    background: none;
    outline: none;
    padding: 0 0 2px 6px;
    min-width: 0;
    flex: 1;
}
.name-box {
    width: 252px;
}
.name-box i {
    display: block;
    border: 9px solid transparent;
    border-top-color: #777;
    border-bottom: none;
    margin-right: 13px;
}
.dots {
    display: flex;
    flex-direction: column;
    justify-content: center;
    gap: 5px;
}
.dots i {
    width: 5px;
    height: 5px;
    background-color: #b3b3b3;
}
.formula-bar .dots {
    margin: 0 37px 0 34px;
}
.fx-box {
    width: 272px;
    margin-right: 7px;
    padding: 0 31px 2px 30px;
    justify-content: space-between;
}
.fx {
    font-family: "Liberation Serif", serif;
    font-style: italic;
    font-size: 38px;
    line-height: 40px;
    color: #6a6a6a;
}
.formula {
    flex: 1;
}
.formula button {
    margin-right: 8px;
}

/* sheet */
.workspace {
    flex: 1;
    min-height: 0;
    display: flex;
}
.sheet {
    flex: 1;
    position: relative;
    overflow: hidden;
    border-right: 1px solid #9b9b9b;
    border-bottom: 1px solid #9b9b9b;
    font-family: Lato, "Open Sans", sans-serif;
    font-size: 33px;
    color: #000;
}
.grid {
    border-spacing: 0;
    table-layout: fixed;
    width: 100%;
    background-color: #fff;
}
.grid th, .grid td {
    height: 48px;
    padding: 0 0 2px;
    font-weight: 400;
    line-height: 44px;
    text-align: center;
    white-space: nowrap;
}
.grid td {
    border-right: 1px solid #d4d4d4;
    border-bottom: 1px solid #d4d4d4;
}
.grid td:last-child {
    border-right: none;
}
.grid thead th {
    width: 168px;
    background: linear-gradient(#e6e6e6, #9b9b9b) right / 1px 100% no-repeat #e6e6e6;
    border-bottom: 1px solid #9b9b9b;
}
.grid thead th:first-child {
    width: 68px;
}
.grid thead th:last-child {
    width: auto;
    background: #e6e6e6;
}
.grid thead .picked {
    background: #d2d2d2;
    border-bottom: 3px solid #217346;
    border-right: 1px solid #b3b3b3;
    color: #217346;
    padding: 0;
}
.grid tbody th {
    background: linear-gradient(90deg, #e6e6e6, #9b9b9b) bottom / 100% 1px no-repeat #e6e6e6;
    border-right: 1px solid #9b9b9b;
}
.grid tbody .picked {
    background-color: #d2d2d2;
    border-right: 3px solid #217346;
    color: #217346;
}
.corner {
    display: block;
    width: 40px;
    height: 40px;
    margin: 4px 0 0 24px;
    background: linear-gradient(to bottom right, transparent 50%, #b3b3b3 50%);
}
.grid .active-cell {
    position: relative;
}
.active-cell::before {
    content: "";
    position: absolute;
    inset: -3px;
    border: 3px solid #217346;
}
.active-cell::after {
    content: "";
    position: absolute;
    right: -5px;
    bottom: -5px;
    width: 10px;
    height: 10px;
    background-color: #217346;
    border: 1px solid #fff;
    border-width: 1px 0 0 1px;
}
.chart {
    position: absolute;
    left: 1111px;
    top: 58px;
    width: 1254px;
    height: 1419px;
    background-color: #fff;
    border: solid #d9d9d9;
    border-width: 3px 2px;
    fill: #595959;
    font-size: 27px;
    text-anchor: middle;
}
.chart-title {
    font-size: 43px;
}
.chart-legend {
    text-anchor: start;
}
.gridline {
    stroke: #d9d9d9;
    stroke-width: 3px;
}
.axis {
    stroke: #bfbfbf;
    stroke-width: 3px;
}
.dot-y {
    fill: #4472c4;
}
.dot-guess {
    fill: none;
    stroke: #ed7d31;
    stroke-width: 3px;
}

/* scroll bars */
.vscroll {
    width: 47px;
    padding: 2px 3px 0 3px;
    display: flex;
    flex-direction: column;
}
.vscroll button, .hscroll button {
    display: flex;
    align-items: center;
    justify-content: center;
    background-color: #fff;
    border: 1px solid #ababab;
    width: 41px;
    height: 41px;
    flex: none;
}
.vthumb {
    background-color: #fff;
    border: 1px solid #ababab;
    flex: 1;
}
.vtrack {
    background-color: #dbdbdb;
    height: 89px;
}
.up, .down, .left, .right {
    display: block;
    border: 11px solid transparent;
}
.up {
    border-bottom-color: #777;
    border-top: none;
}
.down {
    border-top-color: #777;
    border-bottom: none;
}
.left {
    border: 10px solid transparent;
    border-right-color: #777;
    border-left: none;
}
.right {
    border: 10px solid transparent;
    border-left-color: #777;
    border-right: none;
}
.sheet-bar {
    display: flex;
    align-items: center;
    height: 51px;
    border-bottom: 1px solid #c6c6c6;
}
.sheet-nav {
    display: flex;
    gap: 42px;
    width: 169px;
    padding-left: 36px;
}
.sheet-nav .left {
    border-right-color: #c6c6c6;
}
.sheet-nav .right {
    border-left-color: #c6c6c6;
}
.sheet-tab {
    width: 131px;
    height: 43px;
    padding-bottom: 3px;
    font-size: 31px;
    line-height: 40px;
    border-right: 1px solid #ababab;
}
.sheet-nav + .sheet-tab {
    border-left: 1px solid #ababab;
}
.no-line {
    border-right: none;
}
.current {
    align-self: flex-start;
    height: 48px;
    background-color: #fff;
    color: #217346;
    font-weight: 700;
    border-right: 1px solid #ababab;
    border-left: 1px solid #ababab;
    border-bottom: 2px solid #217346;
}
.add-sheet {
    margin-left: 55px;
}
.sheet-bar .dots {
    margin: 0 27px 0 auto;
}
.hscroll {
    display: flex;
    width: 1467px;
    margin-right: 45px;
}
.hthumb {
    background-color: #fff;
    border: 1px solid #ababab;
    flex: 1;
}
.htrack {
    width: 64px;
    background-color: #dbdbdb;
}
.status {
    display: flex;
    align-items: center;
    height: 77px;
    padding: 0 14px;
    background-color: #f1f1f1;
    font-size: 26px;
}
.ready {
    margin-right: auto;
}
.view {
    width: 76px;
    height: 77px;
    display: flex;
    align-items: center;
    justify-content: center;
}
.view.on {
    background-color: #cacaca;
}
.zoom-btn {
    margin-left: 9px;
}
.zoom {
    appearance: none;
    width: 248px;
    height: 30px;
    margin: 0 0 0 9px;
    background: linear-gradient(#ababab, #ababab) center / 100% 3px no-repeat;
}
.zoom::-webkit-slider-thumb {
    appearance: none;
    width: 10px;
    height: 29px;
    background-color: #666;
}
.percent {
    margin-left: 30px;
}
```
FILE: script.js
```js
const columns = 'ABCDEFGHIJKLMNOPQRSTUV'.split('');
const x = [0, 1, 2, 3, 4, 5, 6, 7, 8, 9, 10];
const y = [2, 2, 2, 3, 3, 4, 4, 5, 5, 5, 6];
const guess = [2, 2.4, 2.8, 3.2, 3.6, 4, 4.4, 4.8, 5.2, 5.6, 6];
const error = [0, 0.16, 0.64, 0.04, 0.36, 0, 0.16, 0.04, 0.04, 0.36, 0];

const cells = {
    A1: 'x', B1: 'y', C1: 'y guess', D1: '(y-yg)^2',
    E1: 'm', F1: 0.4, E2: 'b', F2: 2,
    D13: 'sum', D14: 1.8
};
x.forEach((value, i) => {
    const row = i + 2;
    cells['A' + row] = value;
    cells['B' + row] = y[i];
    cells['C' + row] = guess[i];
    cells['D' + row] = error[i];
});

// worksheet grid
let html = '<thead><tr><th><span class="corner"></span></th>';
columns.forEach(c => {
    html += `<th${c === 'V' ? ' class="picked"' : ''}>${c}</th>`;
});
html += '<th></th></tr></thead><tbody>';
for (let row = 1; row <= 31; row++) {
    html += `<tr><th${row === 30 ? ' class="picked"' : ''}>${row}</th>`;
    columns.forEach(c => {
        const id = c + row;
        html += `<td${id === 'V30' ? ' class="active-cell"' : ''}>${cells[id] ?? ''}</td>`;
    });
    html += '<td></td></tr>';
}
document.getElementById('grid').innerHTML = html + '</tbody>';

// scatter chart
const left = 134, bottom = 1265, stepX = 75.2, stepY = 163.3;
const px = v => left + v * stepX;
const py = v => bottom - v * stepY;
let svg = '<text class="chart-title" x="624" y="67">Data Gathered</text>';
for (let i = 0; i <= 7; i++) {
    svg += `<line class="${i ? 'gridline' : 'axis'}" x1="${left}" x2="${px(12)}" y1="${py(i)}" y2="${py(i)}"/>`;
    svg += `<text x="98" y="${py(i) + 9}">${i}</text>`;
}
svg += `<line class="axis" x1="${left}" x2="${left}" y1="${py(7)}" y2="${bottom}"/>`;
for (let i = 0; i <= 12; i += 2) {
    svg += `<text x="${px(i)}" y="1314">${i}</text>`;
}
x.forEach((v, i) => {
    svg += `<circle class="dot-y" cx="${px(v)}" cy="${py(y[i])}" r="9"/>`;
});
x.forEach((v, i) => {
    svg += `<circle class="dot-guess" cx="${px(v)}" cy="${py(guess[i])}" r="8"/>`;
});
svg += '<text x="585" y="1364">x</text>';
svg += '<text transform="translate(71 694) rotate(-90)">y</text>';
svg += '<circle class="dot-y" cx="1113" cy="722" r="9"/><text class="chart-legend" x="1128" y="733">y</text>';
svg += '<circle class="dot-guess" cx="1113" cy="778" r="8"/><text class="chart-legend" x="1128" y="788">y guess</text>';
document.getElementById('chart').innerHTML = svg;
```
